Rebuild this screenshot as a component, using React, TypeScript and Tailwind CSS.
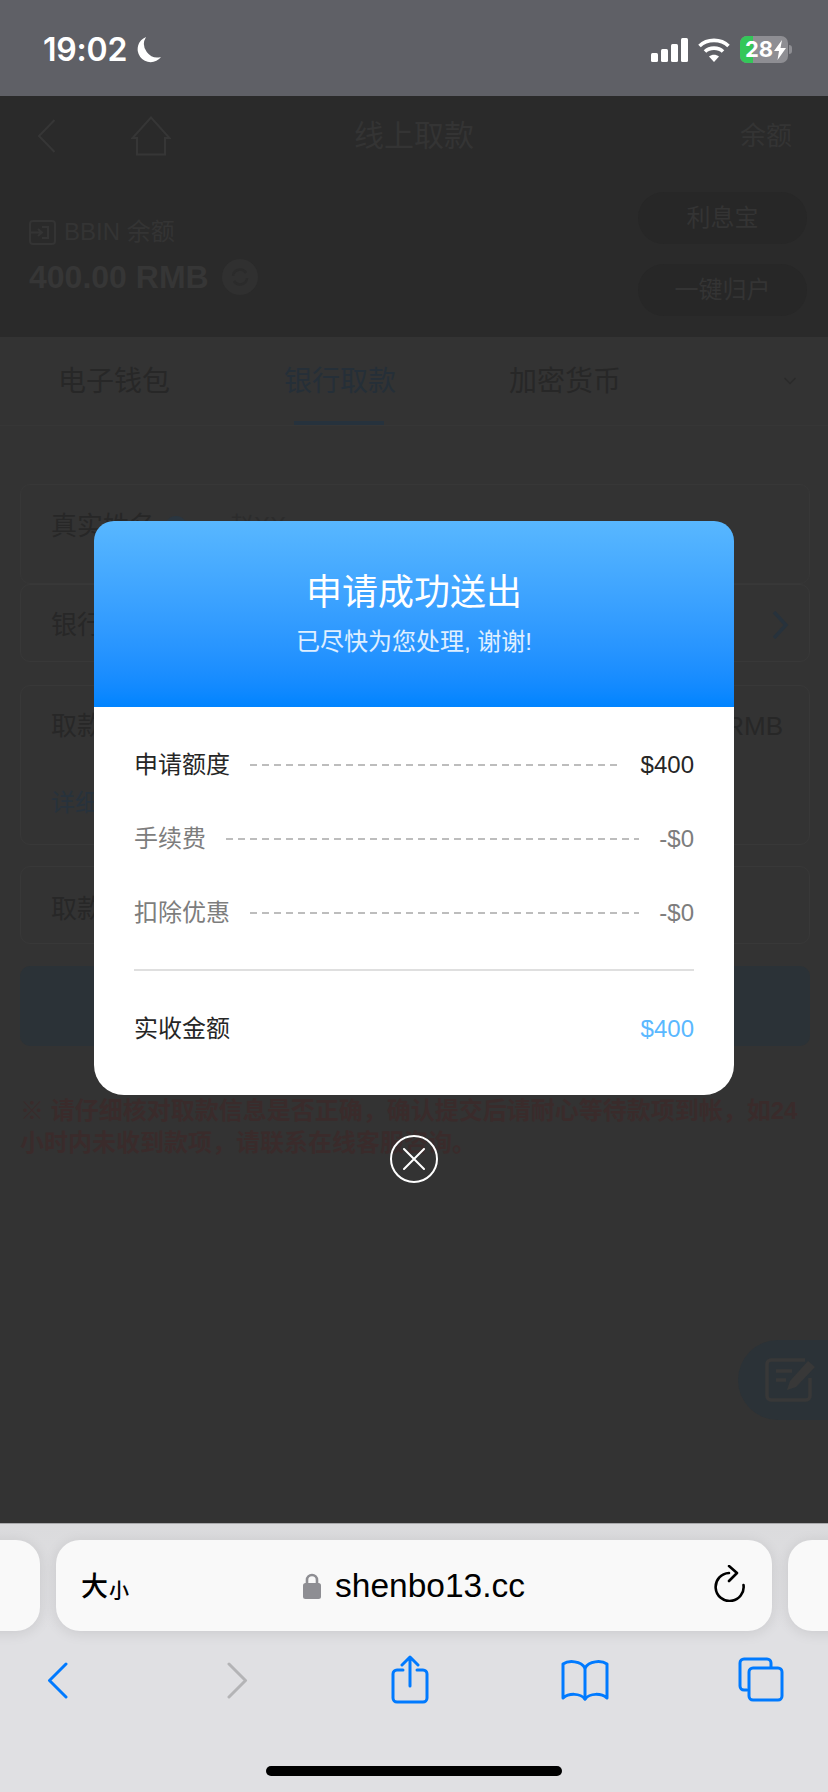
import { ChevronDown } from "lucide-react";

const SANS = "font-['Liberation_Sans','Noto_Sans_CJK_SC',sans-serif]";

function StatusBar() {
  return (
    <div className="flex h-[96px] shrink-0 items-start justify-between bg-[#5f6066] pl-[43px] pr-[36px] pt-[33px]">
      <div className="flex items-center gap-[9px]">
        <span className="font-['Inter',sans-serif] text-[32px] font-semibold leading-[34px] tracking-[-0.2px] text-white">19:02</span>
        <svg width="26" height="28" viewBox="0 0 26 28">
          <path d="M10 1 A13 13 0 1 0 25 21 A13.5 13.5 0 0 1 10 1 Z" fill="#fff" />
        </svg>
      </div>
      <div className="flex items-center gap-[10px] pt-[3px]">
        <svg width="37" height="24" viewBox="0 0 37 24" fill="#fff">
          <rect x="0" y="15" width="7" height="9" rx="1.5" />
          <rect x="10" y="11" width="7" height="13" rx="1.5" />
          <rect x="20" y="6" width="7" height="18" rx="1.5" />
          <rect x="30" y="0" width="7" height="24" rx="1.5" />
        </svg>
        <svg width="32" height="24" viewBox="0 0 32 24" fill="none" stroke="#fff" strokeWidth="3.6">
          <path d="M1.5 8 C9 0.5 23 0.5 30.5 8" />
          <path d="M7 13.5 C11.5 9 20.5 9 25 13.5" />
          <path d="M16 24 L11 18.5 C14 16 18 16 21 18.5 Z" fill="#fff" stroke="none" />
        </svg>
        <div className="flex items-center">
          <div className="relative flex h-[27px] w-[48px] items-center overflow-hidden rounded-[7px] bg-[#8e8e93]">
            <div className="absolute inset-y-0 left-0 w-[13px] bg-[#34c759]" />
            <span className="relative pl-[5px] font-['Inter',sans-serif] text-[22px] font-bold leading-[27px] text-white">28</span>
            <svg className="relative ml-[1px]" width="12" height="20" viewBox="0 0 12 20">
              <path d="M8 0 L0 11 H5 L3.5 20 L12 8 H6.5 Z" fill="#fff" />
            </svg>
          </div>
          <div className="ml-[1px] h-[9px] w-[3px] rounded-r-full bg-[#8e8e93]" />
        </div>
      </div>
    </div>
  );
}

function PageBehind() {
  return (
    <>
      {/* Header */}
      <div className="h-[241px] bg-[#2a2a2a]">
        <div className="relative flex h-[76px] items-center pl-[37px] pr-[36px] pt-[4px]">
          <svg width="19" height="34" viewBox="0 0 19 34" fill="none" stroke="#363636" strokeWidth="2">
            <path d="M17.5 1 L2 17 L17.5 33" />
          </svg>
          <svg className="ml-[75px]" width="40" height="40" viewBox="0 0 40 40" fill="none" stroke="#363636" strokeWidth="2">
            <path d="M20 1.5 L1.5 22 H6 V38.5 H34 V22 H38.5 Z" />
          </svg>
          <span className={`${SANS} absolute left-0 right-0 text-center text-[30px] leading-[36px] text-[#343434]`}>线上取款</span>
          <span className={`${SANS} ml-auto text-[26px] leading-[32px] text-[#343434]`}>余额</span>
        </div>
        <div className="flex justify-between pl-[29px] pr-[21px] pt-[20px]">
          <div className="pt-[26px]">
            <div className="flex items-center gap-[8px]">
              <svg width="27" height="25" viewBox="0 0 27 25" fill="none" stroke="#343434" strokeWidth="2">
                <rect x="1" y="1" width="25" height="23" rx="3" />
                <path d="M1 12.5 H13 M9 9 L13 12.5 L9 16 M13 7 H19 V18 H13" />
              </svg>
              <span className={`${SANS} text-[24px] leading-[28px] text-[#343434]`}>BBIN 余额</span>
            </div>
            <div className="mt-[13px] flex items-center gap-[13px]">
              <span className={`${SANS} text-[32px] font-bold leading-[36px] text-[#363636]`}>400.00 RMB</span>
              <div className="flex h-[36px] w-[36px] items-center justify-center rounded-full bg-[#303030]">
                <svg width="20" height="20" viewBox="0 0 20 20" fill="none" stroke="#2b2b2b" strokeWidth="2.5">
                  <path d="M3 9 A7 7 0 0 1 16 6 M17 11 A7 7 0 0 1 4 14" />
                </svg>
              </div>
            </div>
          </div>
          <div className="flex flex-col gap-[20px]">
            <div className={`${SANS} flex h-[52px] w-[169px] items-center justify-center rounded-full bg-[#272727] text-[24px] text-[#343434]`}>利息宝</div>
            <div className={`${SANS} flex h-[52px] w-[169px] items-center justify-center rounded-full bg-[#272727] text-[24px] text-[#343434]`}>一键归户</div>
          </div>
        </div>
      </div>

      {/* Tabs */}
      <div className="relative flex h-[89px] border-b border-[#363636] pl-[58px] pt-[27px]">
        <span className={`${SANS} w-[226px] text-[28px] leading-[36px] text-[#272727]`}>电子钱包</span>
        <div className="relative w-[225px]">
          <span className={`${SANS} text-[28px] leading-[36px] text-[#252f38]`}>银行取款</span>
          <div className="absolute left-[10px] top-[57px] h-[4px] w-[90px] bg-[#26323d]" />
        </div>
        <span className={`${SANS} text-[28px] leading-[36px] text-[#272727]`}>加密货币</span>
        <ChevronDown className="absolute right-[28px] top-[34px] text-[#2b2b2b]" size={20} strokeWidth={2} />
      </div>

      {/* Form */}
      <div className="pl-[20px] pr-[18px] pt-[58px]">
        <div className="flex h-[100px] items-start rounded-[10px] border border-[#373737] pl-[30px] pt-[23px]">
          <span className={`${SANS} text-[26px] leading-[36px] text-[#272727]`}>真实姓名</span>
          <div className="ml-[10px] mt-[8px] h-[22px] w-[22px] rounded-full bg-[#2a3640]" />
          <span className={`${SANS} ml-[43px] text-[24px] leading-[36px] text-[#2c2c2c]`}>赵XX</span>
        </div>
        <div className="flex h-[78px] items-center justify-between rounded-[10px] border border-[#383838] pl-[30px] pr-[29px] pt-[4px]">
          <span className={`${SANS} text-[26px] leading-[36px] text-[#272727]`}>银行卡</span>
          <svg className="-mr-[9px]" width="18" height="28" viewBox="0 0 18 28" fill="none" stroke="#27323c" strokeWidth="3.5">
            <path d="M3 1 L15 14 L3 27" />
          </svg>
        </div>
        <div className="mt-[23px] h-[160px] rounded-[10px] border border-[#383838] pl-[30px] pr-[29px] pt-[22px]">
          <div className="flex items-center justify-between">
            <span className={`${SANS} text-[26px] leading-[36px] text-[#272727]`}>取款金额</span>
            <span className={`${SANS} -mr-[3px] text-[26px] leading-[36px] text-[#272727]`}>RMB</span>
          </div>
          <div className={`${SANS} mt-[44px] text-[24px] leading-[30px] text-[#27323c]`}>详细</div>
        </div>
        <div className="mt-[21px] flex h-[78px] items-center rounded-[10px] border border-[#383838] pl-[30px] pt-[8px]">
          <span className={`${SANS} text-[26px] leading-[36px] text-[#272727]`}>取款密码</span>
        </div>
        <div className="mt-[22px] h-[80px] rounded-[10px] bg-[#2b3237]" />
        <p className={`${SANS} mt-[49px] pr-[10px] text-[24px] font-bold leading-[32px] text-[#3a2b2b]`}>
          ※ 请仔细核对取款信息是否正确，确认提交后请耐心等待款项到帐，如24小时内未收到款项，请联系在线客服咨询。
        </p>
      </div>

      {/* Floating note button */}
      <div className="absolute right-0 top-[1244px] flex h-[80px] w-[90px] items-center rounded-l-full bg-[#2b3237] pl-[26px]">
        <svg width="54" height="48" viewBox="0 0 54 48" fill="none" stroke="#383838" strokeWidth="3.5">
          <path d="M46 22 V40 A4 4 0 0 1 42 44 H7 A4 4 0 0 1 3 40 V8 A4 4 0 0 1 7 4 H41" />
          <path d="M12 15 H28 M12 24 H22" />
          <path d="M23 34 L26 25 L44 5 L51 11 L32 31 Z" fill="#383838" stroke="none" />
        </svg>
      </div>
    </>
  );
}

function Row({ label, value, labelColor, valueColor }: { label: string; value: string; labelColor: string; valueColor: string }) {
  return (
    <div className="flex h-[74px] items-center">
      <span className={`${SANS} whitespace-nowrap text-[24px] leading-[32px] ${labelColor}`}>{label}</span>
      <div className="mx-[20px] h-[2px] flex-1 bg-[repeating-linear-gradient(90deg,#bdbdbd_0_7px,transparent_7px_12px)]" />
      <span className={`${SANS} text-[24px] leading-[32px] ${valueColor}`}>{value}</span>
    </div>
  );
}

function SuccessModal() {
  return (
    <div className="absolute inset-0 flex flex-col items-center pt-[425px]">
      <div className="w-[640px]">
        <div className="flex h-[186px] flex-col items-center rounded-t-[20px] bg-gradient-to-b from-[#58b7ff] to-[#0084ff] pt-[50px]">
          <span className={`${SANS} text-[36px] leading-[44px] text-white`}>申请成功送出</span>
          <span className={`${SANS} mt-[11px] text-[24px] leading-[32px] text-white/85`}>已尽快为您处理, 谢谢!</span>
        </div>
        <div className="h-[388px] rounded-b-[30px] bg-white px-[40px] pt-[21px]">
          <Row label="申请额度" value="$400" labelColor="text-[#262626]" valueColor="text-[#262626]" />
          <Row label="手续费" value="-$0" labelColor="text-[#7d7d7d]" valueColor="text-[#7d7d7d]" />
          <Row label="扣除优惠" value="-$0" labelColor="text-[#7d7d7d]" valueColor="text-[#7d7d7d]" />
          <div className="mt-[19px] h-[2px] bg-[#dfdfdf]" />
          <div className="mt-[40px] flex items-center justify-between">
            <span className={`${SANS} text-[24px] leading-[36px] text-[#262626]`}>实收金额</span>
            <span className={`${SANS} text-[24px] leading-[36px] text-[#5ab8ff]`}>$400</span>
          </div>
        </div>
      </div>
      <div className="mt-[40px] flex h-[48px] w-[48px] items-center justify-center rounded-full border-2 border-white">
        <svg width="22" height="22" viewBox="0 0 22 22" stroke="#fff" strokeWidth="2" strokeLinecap="round">
          <path d="M1 1 L21 21 M21 1 L1 21" />
        </svg>
      </div>
    </div>
  );
}

function BrowserBar() {
  return (
    <div className="relative h-[269px] shrink-0 overflow-hidden border-t border-[#a9a9ab] bg-[#e0e0e3]">
      {/* Address pills */}
      <div className="flex h-[107px] items-end bg-gradient-to-b from-[#dbdbdd] to-[#e0e0e3] pt-[15px]">
        <div className="flex h-[91px] w-full gap-[16px]">
          <div className="-ml-[60px] h-full w-[100px] shrink-0 rounded-[24px] bg-[#f9f9f9] shadow-[0_2px_14px_rgba(0,0,0,0.1)]" />
          <div className="relative flex h-full w-[716px] shrink-0 items-center justify-center rounded-[24px] bg-[#f9f9f9] shadow-[0_2px_14px_rgba(0,0,0,0.1)]">
            <span className={`${SANS} absolute left-[25px] top-[34px] flex items-end font-medium leading-none text-black`}>
              <span className="text-[27px]">大</span>
              <span className="ml-[1px] text-[20px]">小</span>
            </span>
            <svg className="mr-[14px]" width="18" height="27" viewBox="0 0 18 27">
              <path d="M4 12 V8 A5 5 0 0 1 14 8 V12" fill="none" stroke="#8e8e93" strokeWidth="2.6" />
              <rect x="0" y="11" width="18" height="16" rx="2.5" fill="#8e8e93" />
            </svg>
            <span className="font-['Liberation_Sans',sans-serif] text-[33.5px] leading-[40px] text-black">shenbo13.cc</span>
            <svg className="absolute right-[26px] top-[25px]" width="32" height="37" viewBox="0 0 32 37" fill="none" stroke="#000" strokeWidth="2.6" strokeLinecap="round" strokeLinejoin="round">
              <path d="M15 8 A14 14 0 1 0 29.5 20" />
              <path d="M15 1 L23 8 L15 16" />
            </svg>
          </div>
          <div className="h-full w-[100px] shrink-0 rounded-[24px] bg-[#f9f9f9] shadow-[0_2px_14px_rgba(0,0,0,0.1)]" />
        </div>
      </div>

      {/* Toolbar icons */}
      <div className="flex items-start pl-[47px] pt-[24px]">
        <svg className="mt-[7px]" width="21" height="37" viewBox="0 0 21 37" fill="none" stroke="#007aff" strokeWidth="3" strokeLinecap="round" strokeLinejoin="round">
          <path d="M19 2 L2.5 18.5 L19 35" />
        </svg>
        <svg className="ml-[159px] mt-[7px]" width="21" height="37" viewBox="0 0 21 37" fill="none" stroke="#b4b4b6" strokeWidth="3" strokeLinecap="round" strokeLinejoin="round">
          <path d="M2 2 L18.5 18.5 L2 35" />
        </svg>
        <svg className="ml-[143px]" width="38" height="49" viewBox="0 0 38 49" fill="none" stroke="#007aff" strokeWidth="3" strokeLinecap="round" strokeLinejoin="round">
          <path d="M12 15 H6 A4 4 0 0 0 2 19 V43 A4 4 0 0 0 6 47 H32 A4 4 0 0 0 36 43 V19 A4 4 0 0 0 32 15 H26" />
          <path d="M19 31 V2 M11 10 L19 2 L27 10" />
        </svg>
        <svg className="ml-[132px] mt-[5px]" width="48" height="41" viewBox="0 0 48 41" fill="none" stroke="#007aff" strokeWidth="3" strokeLinecap="round" strokeLinejoin="round">
          <path d="M24 8 C20 1 8 0 2 4 V38 C8 33 19 33 24 39 C29 33 40 33 46 38 V4 C40 0 28 1 24 8 Z" />
          <path d="M24 8 V39" />
        </svg>
        <svg className="ml-[129px] mt-[2px]" width="46" height="45" viewBox="0 0 46 45" fill="none" stroke="#007aff" strokeWidth="3" strokeLinecap="round" strokeLinejoin="round">
          <path d="M9 33 H6 A4 4 0 0 1 2 29 V6 A4 4 0 0 1 6 2 H29 A4 4 0 0 1 33 6 V10" />
          <rect x="11" y="11" width="33" height="32" rx="4" />
        </svg>
      </div>

      {/* Home indicator */}
      <div className="absolute left-[266px] top-[242px] h-[10px] w-[296px] rounded-full bg-black" />
    </div>
  );
}

export default function App() {
  return (
    <div className="flex h-[1792px] w-[828px] flex-col overflow-hidden bg-[#333333]">
      <StatusBar />
      <div className="relative flex-1 overflow-hidden">
        <PageBehind />
        <SuccessModal />
      </div>
      <BrowserBar />
    </div>
  );
}
